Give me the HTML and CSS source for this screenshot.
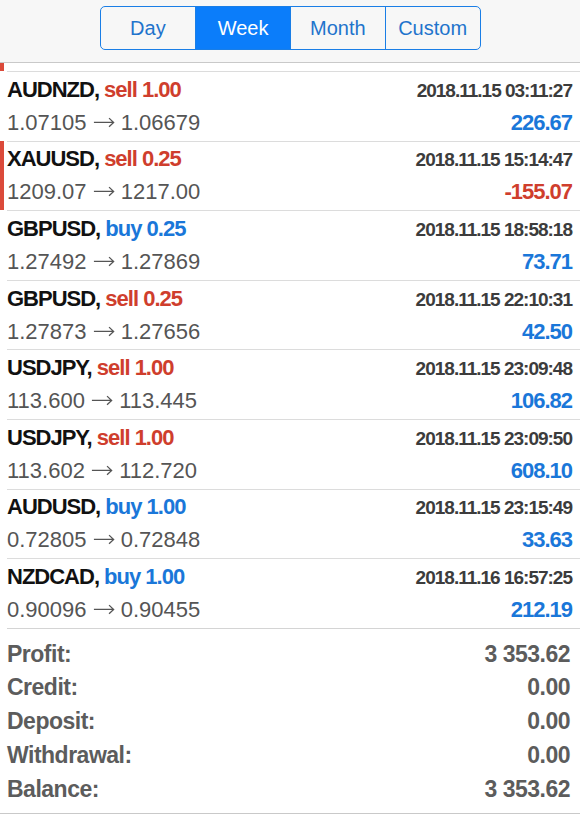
FILE: index.html
```html
<html lang="en">
<head>
  <meta charset="UTF-8">
  <title>History</title>
  <link rel="stylesheet" href="styles.css">
</head>
<body>

<header class="period_bar">
  <div class="segmented">
    <button class="segment">Day</button>
    <button class="segment segment--active">Week</button>
    <button class="segment">Month</button>
    <button class="segment">Custom</button>
  </div>
</header>

<svg width="0" height="0" style="position:absolute">
  <symbol id="arrow" viewBox="0 0 24 12">
    <path d="M1 6.5 H22.5 M17.5 1.8 L22.5 6.5 L17.5 11.2" fill="none" stroke="#555" stroke-width="1.4"/>
  </symbol>
</svg>

<ul class="deals">
  <!-- tail of the row scrolled above -->
  <li class="deal deal--loss deal--stub"></li>

  <li class="deal">
    <div class="deal_body">
      <div class="deal_line">
        <span class="deal_symbol">AUDNZD, <span class="sell">sell 1.00</span></span>
        <span class="deal_time">2018.11.15 03:11:27</span>
      </div>
      <div class="deal_line">
        <span class="deal_prices">1.07105 <svg class="arrow"><use href="#arrow"/></svg> 1.06679</span>
        <span class="deal_profit">226.67</span>
      </div>
    </div>
  </li>

  <li class="deal deal--loss">
    <div class="deal_body">
      <div class="deal_line">
        <span class="deal_symbol">XAUUSD, <span class="sell">sell 0.25</span></span>
        <span class="deal_time">2018.11.15 15:14:47</span>
      </div>
      <div class="deal_line">
        <span class="deal_prices">1209.07 <svg class="arrow"><use href="#arrow"/></svg> 1217.00</span>
        <span class="deal_profit deal_profit--neg">-155.07</span>
      </div>
    </div>
  </li>

  <li class="deal">
    <div class="deal_body">
      <div class="deal_line">
        <span class="deal_symbol">GBPUSD, <span class="buy">buy 0.25</span></span>
        <span class="deal_time">2018.11.15 18:58:18</span>
      </div>
      <div class="deal_line">
        <span class="deal_prices">1.27492 <svg class="arrow"><use href="#arrow"/></svg> 1.27869</span>
        <span class="deal_profit">73.71</span>
      </div>
    </div>
  </li>

  <li class="deal">
    <div class="deal_body">
      <div class="deal_line">
        <span class="deal_symbol">GBPUSD, <span class="sell">sell 0.25</span></span>
        <span class="deal_time">2018.11.15 22:10:31</span>
      </div>
      <div class="deal_line">
        <span class="deal_prices">1.27873 <svg class="arrow"><use href="#arrow"/></svg> 1.27656</span>
        <span class="deal_profit">42.50</span>
      </div>
    </div>
  </li>

  <li class="deal">
    <div class="deal_body">
      <div class="deal_line">
        <span class="deal_symbol">USDJPY, <span class="sell">sell 1.00</span></span>
        <span class="deal_time">2018.11.15 23:09:48</span>
      </div>
      <div class="deal_line">
        <span class="deal_prices">113.600 <svg class="arrow"><use href="#arrow"/></svg> 113.445</span>
        <span class="deal_profit">106.82</span>
      </div>
    </div>
  </li>

  <li class="deal">
    <div class="deal_body">
      <div class="deal_line">
        <span class="deal_symbol">USDJPY, <span class="sell">sell 1.00</span></span>
        <span class="deal_time">2018.11.15 23:09:50</span>
      </div>
      <div class="deal_line">
        <span class="deal_prices">113.602 <svg class="arrow"><use href="#arrow"/></svg> 112.720</span>
        <span class="deal_profit">608.10</span>
      </div>
    </div>
  </li>

  <li class="deal">
    <div class="deal_body">
      <div class="deal_line">
        <span class="deal_symbol">AUDUSD, <span class="buy">buy 1.00</span></span>
        <span class="deal_time">2018.11.15 23:15:49</span>
      </div>
      <div class="deal_line">
        <span class="deal_prices">0.72805 <svg class="arrow"><use href="#arrow"/></svg> 0.72848</span>
        <span class="deal_profit">33.63</span>
      </div>
    </div>
  </li>

  <li class="deal">
    <div class="deal_body">
      <div class="deal_line">
        <span class="deal_symbol">NZDCAD, <span class="buy">buy 1.00</span></span>
        <span class="deal_time">2018.11.16 16:57:25</span>
      </div>
      <div class="deal_line">
        <span class="deal_prices">0.90096 <svg class="arrow"><use href="#arrow"/></svg> 0.90455</span>
        <span class="deal_profit">212.19</span>
      </div>
    </div>
  </li>
</ul>

<section class="summary">
  <div class="summary_list">
    <div class="summary_row"><span>Profit:</span><span>3 353.62</span></div>
    <div class="summary_row"><span>Credit:</span><span>0.00</span></div>
    <div class="summary_row"><span>Deposit:</span><span>0.00</span></div>
    <div class="summary_row"><span>Withdrawal:</span><span>0.00</span></div>
    <div class="summary_row"><span>Balance:</span><span>3 353.62</span></div>
  </div>
</section>

</body>
</html>
```

FILE: styles.css
```css
* {
  padding: 0;
  margin: 0;
  box-sizing: border-box;
}

body {
  margin: 0;
  background: #fff;
  font-family: 'Liberation Sans', Arial, sans-serif;
}

/* period switcher */
.period_bar {
  height: 63px;
  padding-top: 6px;
  display: flex;
  justify-content: center;
  align-items: flex-start;
  background: #f7f7f7;
  border-bottom: 1px solid #c9c9c9;
}

.segmented {
  width: 381px;
  height: 44px;
  display: grid;
  grid-template-columns: repeat(4, 1fr);
  border: 1.5px solid #1a7ee6;
  border-radius: 5px;
  overflow: hidden;
}

.segment {
  border: none;
  border-left: 1.5px solid #1a7ee6;
  background: transparent;
  font-family: 'Liberation Sans', Arial, sans-serif;
  font-size: 20px;
  color: #1f74cc;
}
.segment:first-child { border-left: none; }

.segment--active {
  background: #0b7dfa;
  color: #fff;
}

/* deals list */
.deals { list-style: none; }

.deal {
  border-left: 4px solid transparent;
  padding-left: 3px;
}
.deal--loss { border-left-color: #db4a3a; }
.deal--stub { height: 8px; }

.deal_body {
  height: 69.6px;
  padding: 1.75px 8px 0 0;
  border-top: 1px solid #dcdcdc;
}

.deal_line {
  display: flex;
  justify-content: space-between;
  align-items: baseline;
  line-height: 32px;
}

.deal_symbol {
  font-size: 22px;
  font-weight: bold;
  letter-spacing: -1px;
  color: #111;
}

.sell { color: #cf3e2d; }
.buy { color: #1a77d9; }

.deal_time {
  font-size: 19px;
  font-weight: bold;
  letter-spacing: -1px;
  color: #3c3c3c;
}

.deal_prices {
  font-size: 22px;
  color: #555;
}

.arrow {
  width: 22px;
  height: 12px;
  vertical-align: 2px;
}

.deal_profit {
  font-size: 22px;
  font-weight: bold;
  letter-spacing: -1px;
  color: #1a77d9;
}
.deal_profit--neg { color: #cf3e2d; }

/* totals */
.summary {
  border-bottom: 1px solid #c9c9c9;
}

.summary_list {
  margin-left: 7px;
  padding: 9px 10px 7px 0;
  border-top: 1px solid #d4d4d4;
}

.summary_row {
  display: flex;
  justify-content: space-between;
  line-height: 33.7px;
  font-size: 23px;
  font-weight: bold;
  letter-spacing: -0.5px;
  color: #5c5c5c;
}
```
